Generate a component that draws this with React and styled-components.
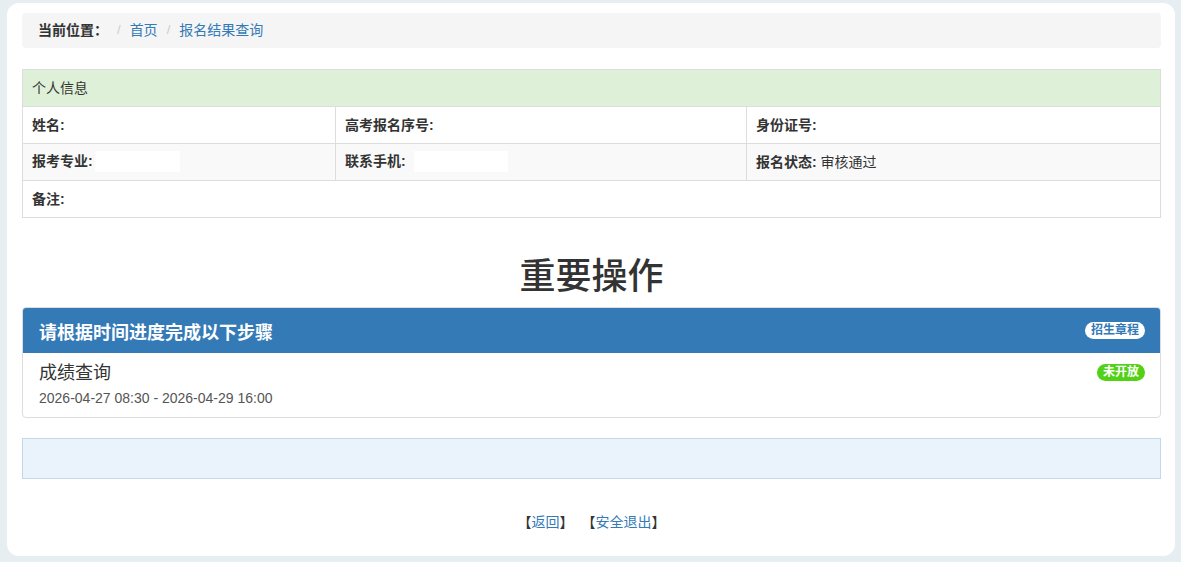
import React from "react";
import styled, { createGlobalStyle } from "styled-components";

const Global = createGlobalStyle`
  html, body { margin: 0; padding: 0; }
  body {
    background: #e7eef2;
    font-family: "Liberation Sans", "Noto Sans CJK SC", sans-serif;
    font-size: 14px;
    color: #333;
  }
  * { box-sizing: border-box; }
`;

const Card = styled.div`
  margin: 3px 6px 7px 7px;
  background: #fff;
  border-radius: 12px;
  padding: 10px 14px 24px 15px;
  min-height: 552px;
`;

const Breadcrumb = styled.div`
  display: flex;
  align-items: center;
  height: 35px;
  padding: 0 16px;
  background: #f5f5f5;
  border-radius: 4px;
  margin-bottom: 21px;
  font-size: 14px;
  line-height: 20px;
  padding-bottom: 2px;
`;

const CrumbLabel = styled.span`
  font-weight: bold;
  color: #333;
  margin-right: 0;
`;

const Sep = styled.span`
  color: #ccc;
  padding: 0 9px;
  font-size: 13px;
`;

const Link = styled.a`
  color: #337ab7;
  text-decoration: none;
`;

const Table = styled.table`
  width: 100%;
  border-collapse: collapse;
  margin-bottom: 0;
  font-size: 14px;
`;

const Row = styled.tr`
  background: ${(p) => (p.$variant === "head" ? "#dff0d8" : p.$variant === "stripe" ? "#f9f9f9" : "#fff")};
`;

const Cell = styled.td`
  border: 1px solid #ddd;
  height: 37px;
  padding: 0 9px 2px;
  vertical-align: middle;
  width: ${(p) => p.$w || "auto"};
`;

const Label = styled.b`
  font-weight: bold;
`;

const Mask = styled.span`
  display: inline-block;
  vertical-align: middle;
  width: ${(p) => p.$w}px;
  height: 21px;
  background: #fff;
  margin-left: ${(p) => p.$ml || 0}px;
`;

const Title = styled.h1`
  margin: 39px 0 10px;
  text-align: center;
  font-size: 36px;
  line-height: 40px;
  font-weight: 500;
  color: #333;
`;

const Panel = styled.div`
  border: 1px solid #ddd;
  border-radius: 4px;
  margin-bottom: 20px;
  overflow: hidden;
`;

const PanelHead = styled.div`
  background: #337ab7;
  color: #fff;
  height: 45px;
  padding: 0 15px 0 16px;
  display: flex;
  align-items: center;
  justify-content: space-between;
  font-size: 18px;
  font-weight: bold;
`;

const Badge = styled.span`
  display: inline-block;
  font-size: 12px;
  font-weight: bold;
  line-height: 17px;
  padding: 0 6px;
  border-radius: 9px;
  background: ${(p) => p.$bg};
  color: ${(p) => p.$fg};
  margin-top: ${(p) => p.$mt || 0}px;
`;

const PanelBody = styled.div`
  padding: 8px 15px 11px 16px;
  display: flex;
  justify-content: space-between;
  align-items: flex-start;
`;

const StepName = styled.div`
  font-size: 18px;
  line-height: 22px;
  color: #333;
  margin-top: 1px;
`;

const StepTime = styled.div`
  font-size: 14px;
  color: #555;
  margin-top: 6px;
`;

const Alert = styled.div`
  height: 41px;
  background: #eaf3fc;
  border: 1px solid #c4d8e8;
`;

const Footer = styled.div`
  margin-top: 33px;
  text-align: center;
  line-height: 20px;
  font-size: 14px;
  color: #333;
`;

export default function App() {
  return (
    <>
      <Global />
      <Card>
        <Breadcrumb>
          <CrumbLabel>当前位置：</CrumbLabel>
          <Sep>/</Sep>
          <Link href="#">首页</Link>
          <Sep>/</Sep>
          <Link href="#">报名结果查询</Link>
        </Breadcrumb>

        <Table>
          <tbody>
            <Row $variant="head">
              <Cell colSpan={3}>个人信息</Cell>
            </Row>
            <Row>
              <Cell $w="313px"><Label>姓名:</Label></Cell>
              <Cell $w="411px"><Label>高考报名序号:</Label></Cell>
              <Cell><Label>身份证号:</Label></Cell>
            </Row>
            <Row $variant="stripe">
              <Cell><Label>报考专业:</Label><Mask $w={85} $ml={2} /></Cell>
              <Cell><Label>联系手机:</Label><Mask $w={94} $ml={8} /></Cell>
              <Cell><Label>报名状态:</Label> 审核通过</Cell>
            </Row>
            <Row>
              <Cell colSpan={3}><Label>备注:</Label></Cell>
            </Row>
          </tbody>
        </Table>

        <Title>重要操作</Title>

        <Panel>
          <PanelHead>
            <span>请根据时间进度完成以下步骤</span>
            <Badge $bg="#fff" $fg="#337ab7">招生章程</Badge>
          </PanelHead>
          <PanelBody>
            <div>
              <StepName>成绩查询</StepName>
              <StepTime>2026-04-27 08:30 - 2026-04-29 16:00</StepTime>
            </div>
            <Badge $bg="#52d117" $fg="#fff" $mt={3}>未开放</Badge>
          </PanelBody>
        </Panel>

        <Alert />

        <Footer>
          【<Link href="#">返回</Link>】&nbsp;&nbsp;【<Link href="#">安全退出</Link>】
        </Footer>
      </Card>
    </>
  );
}
